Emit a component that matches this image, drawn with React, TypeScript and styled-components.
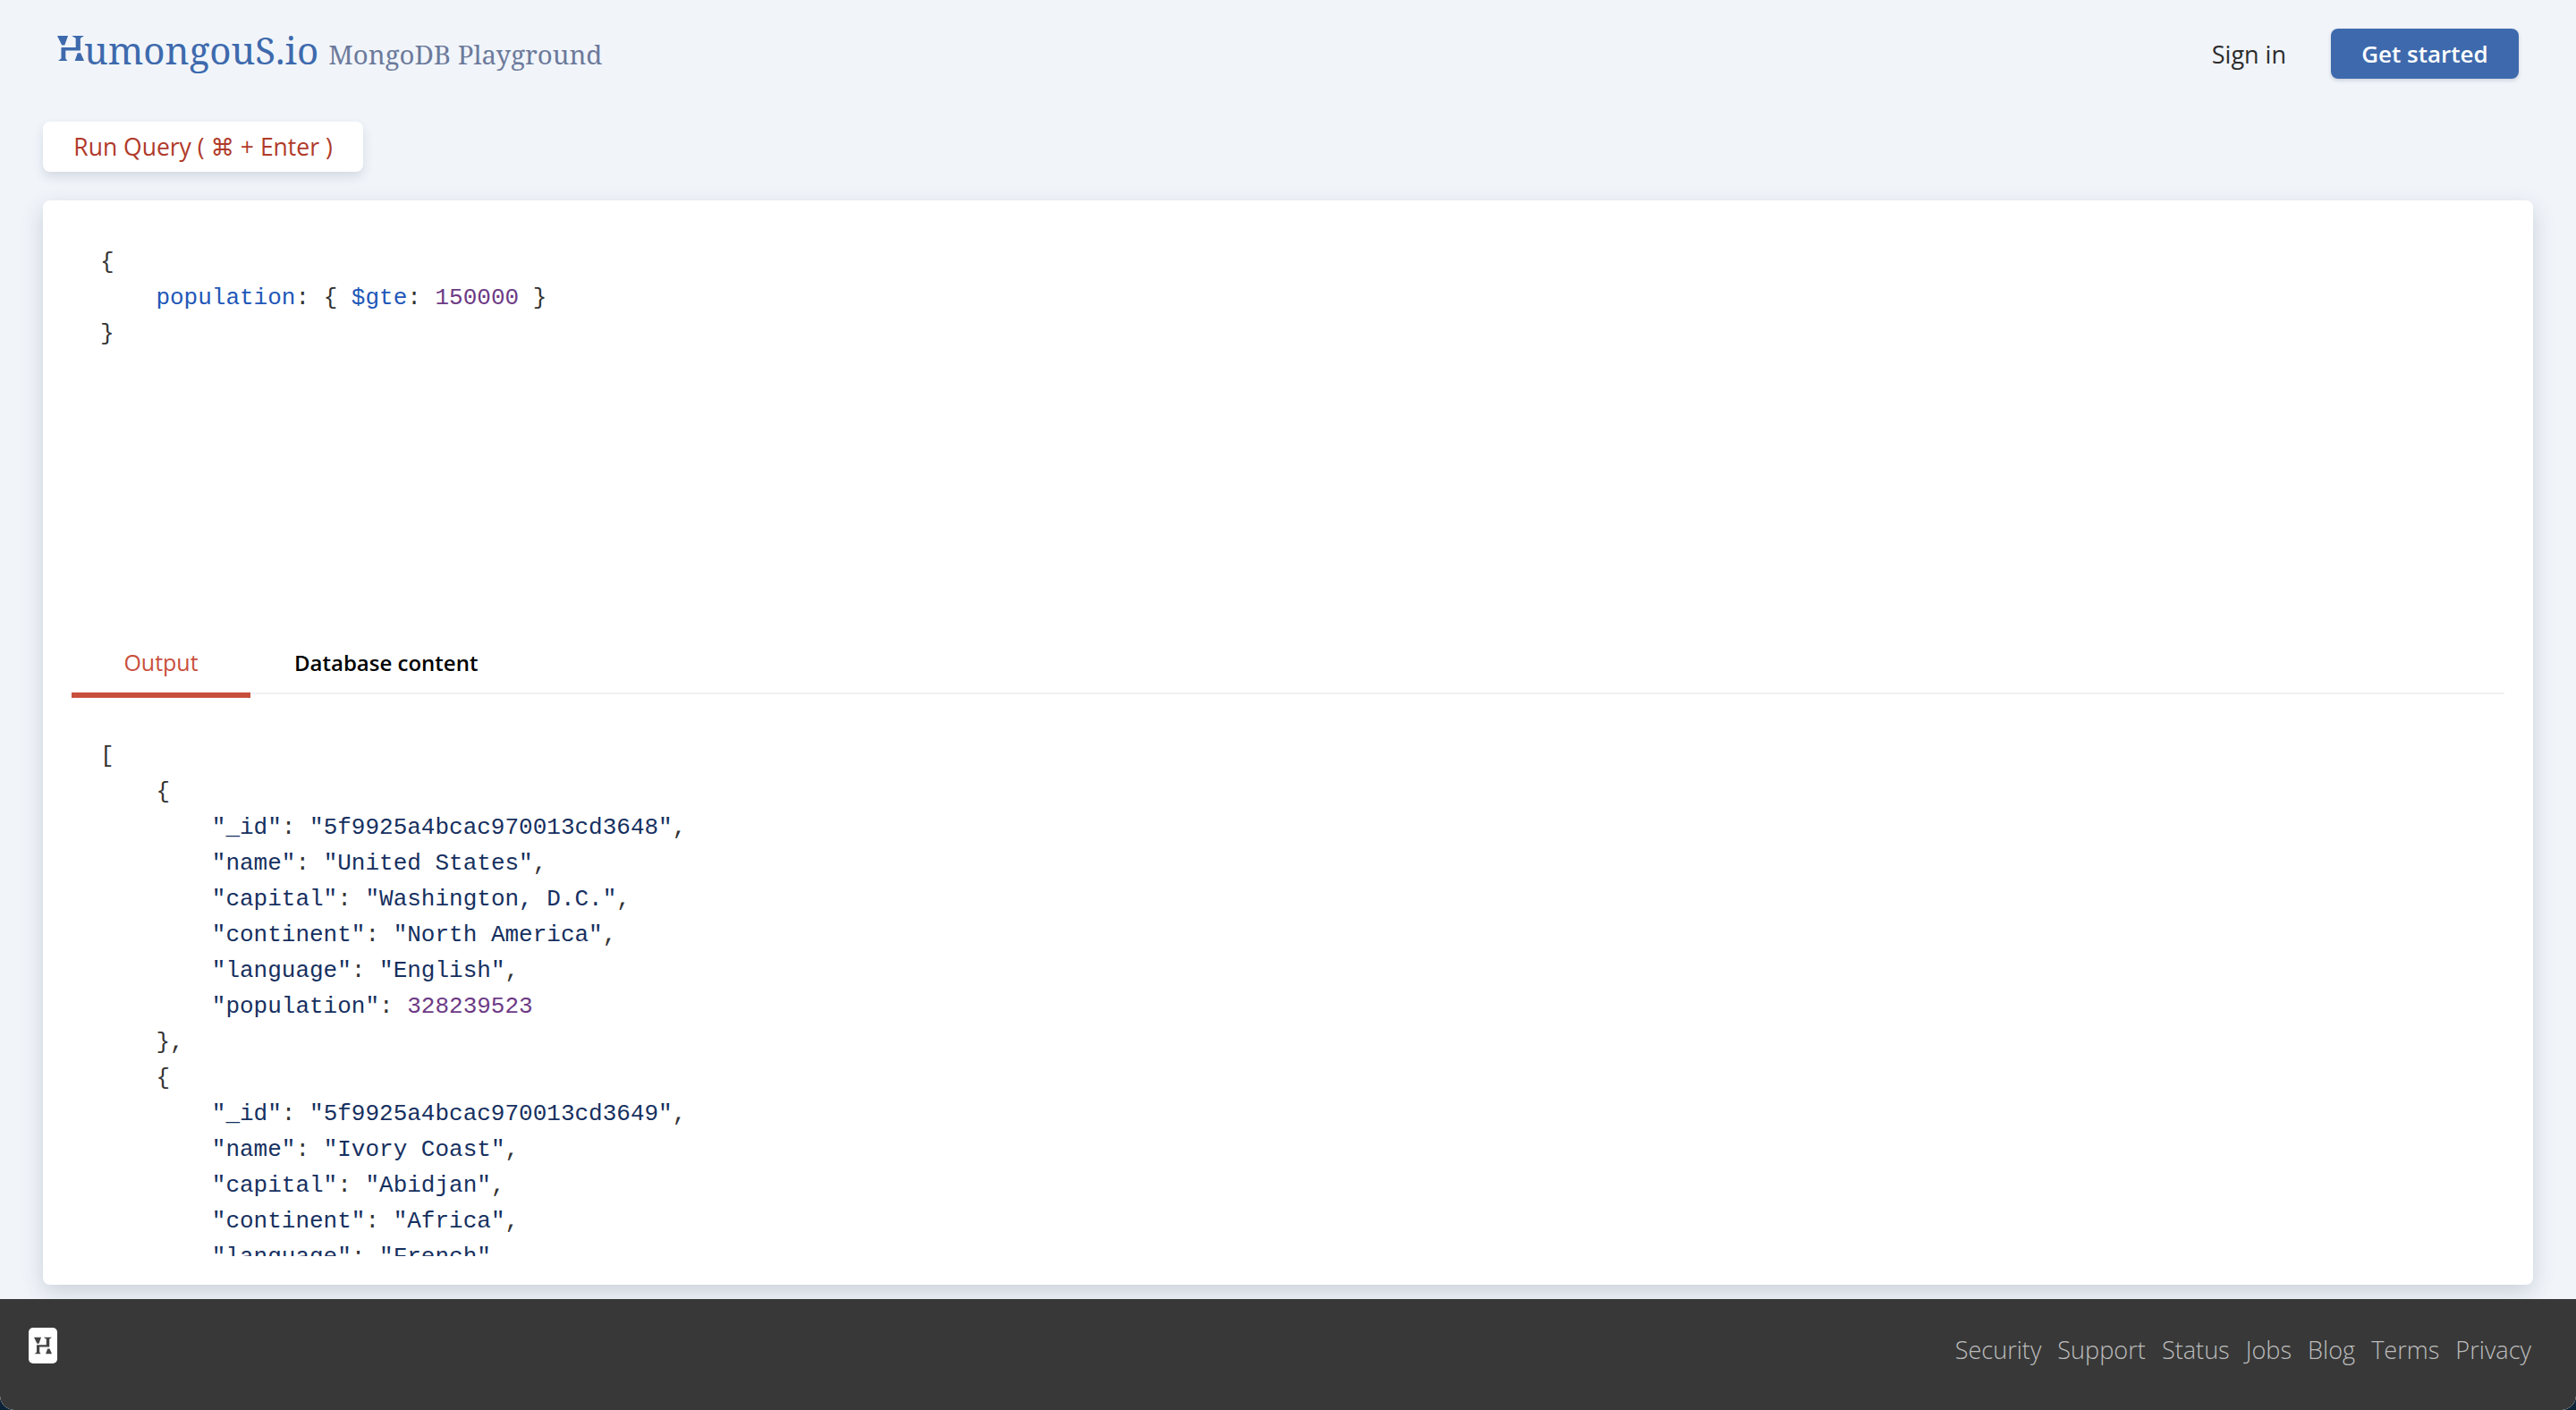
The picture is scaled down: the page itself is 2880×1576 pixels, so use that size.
import React from "react";
import styled, { createGlobalStyle } from "styled-components";

const Global = createGlobalStyle`
  html, body { margin: 0; padding: 0; height: 100%; background: #0c2238; }
  #root { height: 1576px; }
  * { box-sizing: border-box; }
`;

const Page = styled.div`
  height: 1576px;
  display: flex;
  flex-direction: column;
  background: #f1f5fa;
  border-radius: 0 0 16px 16px;
  font-family: "Open Sans", "Noto Sans", sans-serif;
  overflow: hidden;
`;

const Header = styled.header`
  height: 120px;
  flex: none;
  display: flex;
  align-items: flex-start;
  justify-content: space-between;
  padding: 32px 64px 0 64px;
`;

const Brand = styled.a`
  display: flex;
  align-items: baseline;
  color: #3e6aad;
  font-family: "Noto Serif", "Liberation Serif", "DejaVu Serif", serif;
  text-decoration: none;
`;

const BrandMark = styled.svg`
  width: 30px;
  height: 28px;
  fill: #3e6aad;
  flex: none;
  align-self: flex-start;
  margin-top: 8px;
`;

const BrandName = styled.span`
  font-size: 42px;
  line-height: 48px;
`;

const BrandTag = styled.span`
  font-size: 29.4px;
  line-height: 48px;
  margin-left: 11px;
  color: #6c7a9b;
`;

const Actions = styled.nav`
  display: flex;
  align-items: center;
  gap: 50px;
`;

const SignIn = styled.a`
  font-size: 27px;
  color: #2d2d2d;
`;

const GetStarted = styled.button`
  width: 210px;
  height: 56px;
  border: none;
  border-radius: 8px;
  background: #3e6aad;
  color: #fff;
  font: 600 26px "Open Sans", sans-serif;
  box-shadow: 0 2px 4px rgba(40, 60, 100, 0.2);
`;

const Main = styled.main`
  flex: 1;
  min-height: 0;
  display: flex;
  flex-direction: column;
  padding: 16px 48px 16px 48px;
`;

const RunButton = styled.button`
  align-self: flex-start;
  width: 358px;
  height: 56px;
  flex: none;
  border: none;
  border-radius: 8px;
  background: #fff;
  color: #b03a2a;
  font: 500 26.5px "Open Sans", "DejaVu Sans", sans-serif;
  box-shadow: 0 6px 12px rgba(50, 60, 90, 0.14);
`;

const Card = styled.section`
  flex: 1;
  min-height: 0;
  margin-top: 32px;
  display: flex;
  flex-direction: column;
  background: #fff;
  border-radius: 8px;
  padding: 0 32px 32px;
  box-shadow: 0 8px 24px rgba(50, 60, 90, 0.2);
`;

const Editor = styled.pre`
  height: 476px;
  flex: none;
  margin: 0;
  padding: 49px 32px 0;
`;

const Line = styled.div<{ $indent?: number }>`
  height: 40px;
  padding-left: ${(p) => (p.$indent ?? 0) * 62.4}px;
  font: 26px/40px "Liberation Mono", "DejaVu Sans Mono", monospace;
  color: #333;
  white-space: pre;
`;

const Key = styled.span`
  color: #2257b8;
`;

const Num = styled.span`
  color: #6d3a85;
`;

const Str = styled.span`
  color: #16305f;
`;

const Tabs = styled.div`
  flex: none;
  display: flex;
  height: 76px;
  border-bottom: 2px solid #f1f1f3;
`;

const Tab = styled.div<{ $active?: boolean }>`
  height: 80px;
  min-width: ${(p) => (p.$active ? "200px" : "0")};
  padding: 6px 49px 0;
  display: flex;
  align-items: center;
  justify-content: center;
  font-size: ${(p) => (p.$active ? 25 : 24)}px;
  font-weight: ${(p) => (p.$active ? 400 : 600)};
  color: ${(p) => (p.$active ? "#c94f3d" : "#000")};
  border-bottom: 6px solid ${(p) => (p.$active ? "#c94f3d" : "transparent")};
`;

const Output = styled.pre`
  flex: 1;
  min-height: 0;
  margin: 0;
  padding: 49px 32px 0;
  overflow: hidden;
`;

const Footer = styled.footer`
  height: 124px;
  flex: none;
  display: flex;
  align-items: flex-start;
  justify-content: space-between;
  padding: 32px 50px 0 32px;
  background: #383838;
  border-radius: 0 0 16px 16px;
`;

const FooterMark = styled.div`
  width: 32px;
  height: 40px;
  display: flex;
  align-items: center;
  justify-content: center;
  background: #fff;
  border-radius: 5px;
`;

const FooterGlyph = styled.svg`
  width: 20px;
  height: 20px;
  fill: #444;
`;

const FooterLinks = styled.nav`
  display: flex;
  gap: 18px;
  margin-top: 5px;
`;

const FooterLink = styled.a`
  font-size: 27.1px;
  line-height: 40px;
  font-weight: 300;
  color: #bcbcbc;
`;

const markPath =
  "M0 0H35L24 30H15ZM47 0H87L75 8V47H27V72L33 80H3L13 72V37H60V8ZM87 80H57L66 55H76Z";

const doc1: string[] = [
  "5f9925a4bcac970013cd3648",
  "United States",
  "Washington, D.C.",
  "North America",
  "English",
  "328239523",
];

const doc2: string[] = ["5f9925a4bcac970013cd3649", "Ivory Coast", "Abidjan", "Africa", "French", ""];

const Doc = ({ d, last }: { d: string[]; last?: boolean }) => (
  <>
    <Line $indent={1}>{"{"}</Line>
    <Line $indent={2}><Str>"_id"</Str>: <Str>"{d[0]}"</Str>,</Line>
    <Line $indent={2}><Str>"name"</Str>: <Str>"{d[1]}"</Str>,</Line>
    <Line $indent={2}><Str>"capital"</Str>: <Str>"{d[2]}"</Str>,</Line>
    <Line $indent={2}><Str>"continent"</Str>: <Str>"{d[3]}"</Str>,</Line>
    <Line $indent={2}><Str>"language"</Str>: <Str>"{d[4]}"</Str>,</Line>
    {!last && (
      <>
        <Line $indent={2}><Str>"population"</Str>: <Num>{d[5]}</Num></Line>
        <Line $indent={1}>{"},"}</Line>
      </>
    )}
  </>
);

export default function App() {
  return (
    <Page>
      <Global />
      <Header>
        <Brand>
          <BrandMark viewBox="0 0 87 80" preserveAspectRatio="none" role="img" aria-label="HumongouS logo"><path d={markPath} /></BrandMark>
          <BrandName>umongouS.io</BrandName>
          <BrandTag>MongoDB Playground</BrandTag>
        </Brand>
        <Actions>
          <SignIn>Sign in</SignIn>
          <GetStarted>Get started</GetStarted>
        </Actions>
      </Header>
      <Main>
        <RunButton>Run Query ( ⌘ + Enter )</RunButton>
        <Card>
          <Editor>
            <Line>{"{"}</Line>
            <Line $indent={1}><Key>population</Key>: {"{ "}<Key>$gte</Key>: <Num>150000</Num>{" }"}</Line>
            <Line>{"}"}</Line>
          </Editor>
          <Tabs>
            <Tab $active>Output</Tab>
            <Tab>Database content</Tab>
          </Tabs>
          <Output>
            <Line>[</Line>
            <Doc d={doc1} />
            <Doc d={doc2} last />
          </Output>
        </Card>
      </Main>
      <Footer>
        <FooterMark>
          <FooterGlyph viewBox="0 0 87 80" role="img" aria-label="HumongouS logo"><path d={markPath} /></FooterGlyph>
        </FooterMark>
        <FooterLinks>
          {["Security", "Support", "Status", "Jobs", "Blog", "Terms", "Privacy"].map((l) => (
            <FooterLink key={l}>{l}</FooterLink>
          ))}
        </FooterLinks>
      </Footer>
    </Page>
  );
}
